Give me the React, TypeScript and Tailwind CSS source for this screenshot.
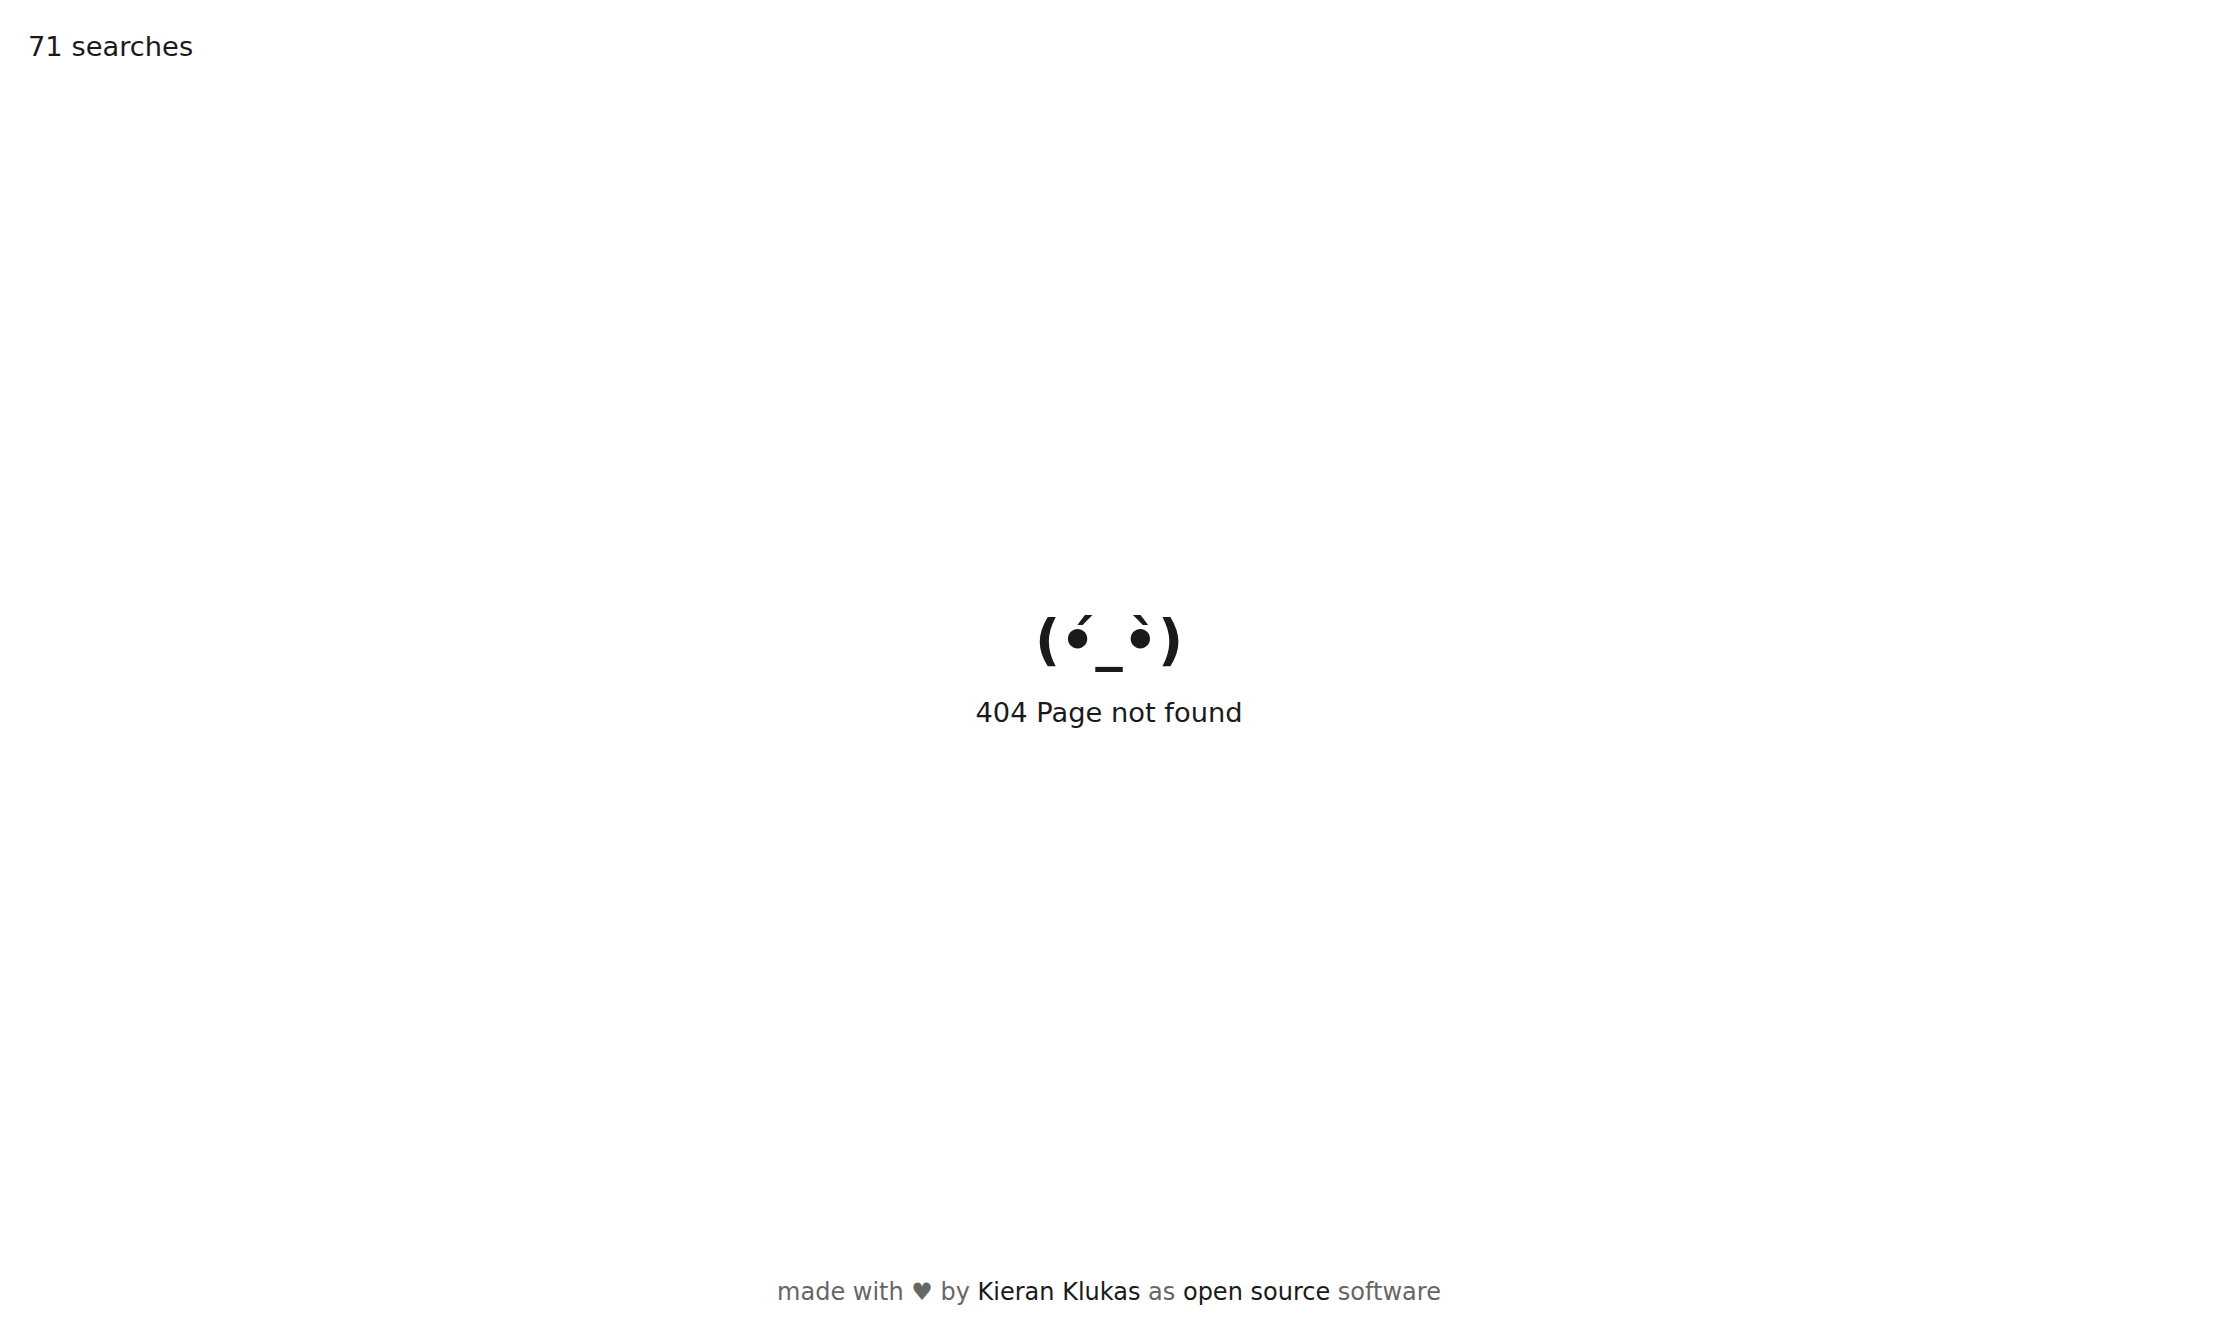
import React from 'react';

const font = { fontFamily: '"DejaVu Sans", sans-serif' };

export default function App() {
  const searches = 71;

  return (
    <div
      className="min-h-screen flex flex-col bg-white text-[#1a1a1a] text-[27.3px]"
      style={font}
    >
      <header className="pt-[27px] px-[28px]">
        <span>{searches} searches</span>
      </header>

      <main className="flex-1 flex flex-col items-center justify-center pb-[2px]">
        <div className="text-[55px] font-bold leading-tight mb-[19px]">(•́_•̀)</div>
        <p>404 Page not found</p>
      </main>

      <footer className="p-[27px] pt-0 text-center text-[24px] text-[#666666]">
        made with ♥ by{' '}
        <a href="#" className="text-[#1a1a1a]">
          Kieran Klukas
        </a>{' '}
        as{' '}
        <a href="#" className="text-[#1a1a1a]">
          open source
        </a>{' '}
        software
      </footer>
    </div>
  );
}
